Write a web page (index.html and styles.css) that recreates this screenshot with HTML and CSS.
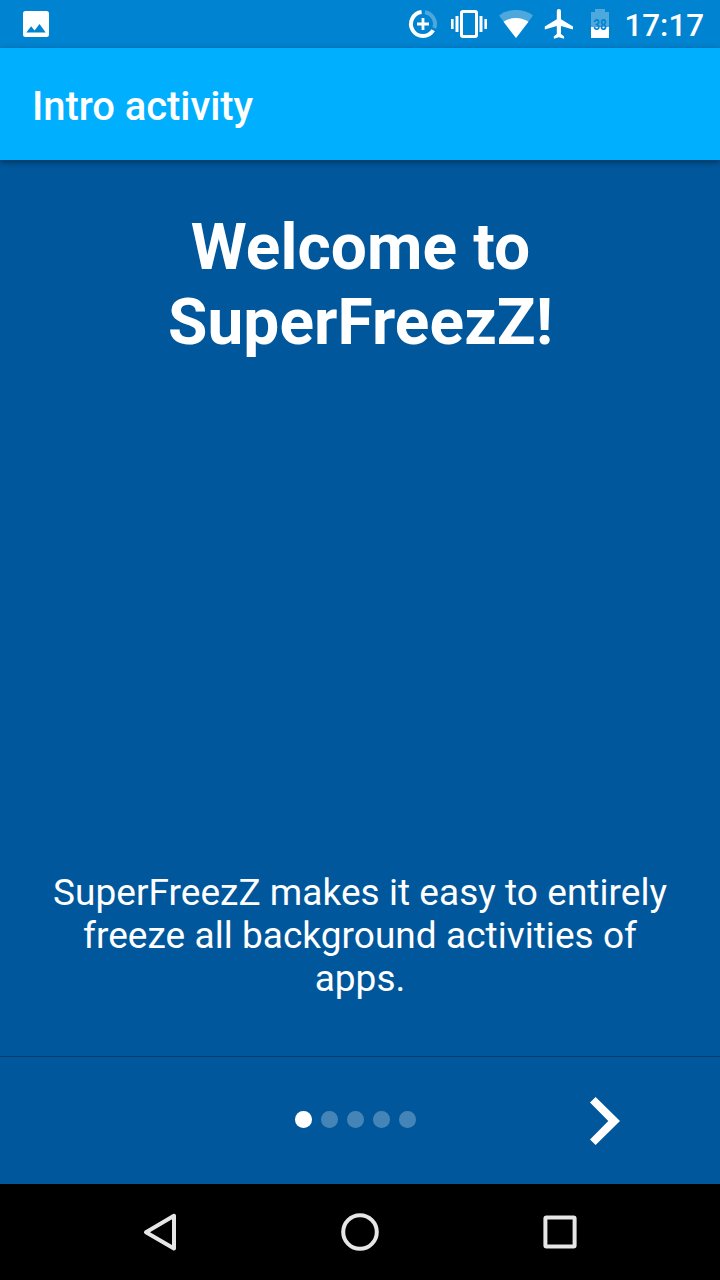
FILE: index.html
```html
<!DOCTYPE html>
<html lang="en">
<head>
<meta charset="utf-8">
<title>Intro activity</title>
<link rel="stylesheet" href="styles.css">
</head>
<body>
<div class="screen">
  <div class="status-bar">
    <svg class="icon-picture" width="26" height="26" viewBox="0 0 26 26">
      <path fill="#fff" fill-rule="evenodd" d="M2.5 0h21a2.5 2.5 0 0 1 2.5 2.5v21a2.5 2.5 0 0 1-2.5 2.5h-21A2.5 2.5 0 0 1 0 23.5v-21A2.5 2.5 0 0 1 2.5 0zM3.3 21.5h19.4l-6.2-8.5-4.9 6.5-3.5-4.3z"/>
    </svg>
    <div class="status-icons">
      <svg width="320" height="48" viewBox="400 0 320 48" class="status-glyphs">
        <g fill="none" stroke="#fff" stroke-width="4">
          <path d="M421.6 12.1A12 12 0 1 0 433.2 30.3"/>
          <path d="M425 12.2A12 12 0 0 1 434.3 28" opacity=".3"/>
          <path d="M417 24h12M423 18v12" stroke-width="2.8"/>
        </g>
        <rect x="461.5" y="11.5" width="15" height="25" rx="1.5" fill="none" stroke="#fff" stroke-width="3"/>
        <path fill="#fff" d="M455.5 16h3v16h-3zM451 19h2.6v10H451zM479.5 16h3v16h-3zM484.4 19h2.6v10h-2.6z"/>
        <path fill="#fff" opacity=".3" d="M516 38L499 15.5Q506 10 516 10T533 15.5z"/>
        <path fill="#fff" d="M516 38L503.5 21.8Q509 18 516 18T528.5 21.8z"/>
        <path fill="#fff" d="M573 29.6v-3l-12-7.4v-8.1a2.1 2.1 0 0 0-4.2 0v8.1l-12 7.4v3l12-3.7v8.2l-3 2.3v2.3l5.1-1.5 5.2 1.5v-2.3l-3.1-2.3v-8.2z"/>
        <path fill="#fff" opacity=".3" d="M591 27V12h4V9h10v3h4v15z"/>
        <path fill="#fff" d="M591 27h18v11h-18z"/>
        <text class="battery-level" x="593.3" y="30" textLength="13.5" lengthAdjust="spacingAndGlyphs">38</text>
        <text class="clock" x="624.5" y="36" textLength="79.5" lengthAdjust="spacingAndGlyphs">17:17</text>
      </svg>
    </div>
  </div>
  <header class="app-bar">Intro activity</header>
  <main class="slide">
    <h1 class="slide-title">Welcome to<br>SuperFreezZ!</h1>
    <p class="slide-text">SuperFreezZ makes it easy to entirely<br>freeze all background activities of<br>apps.</p>
  </main>
  <div class="pager">
    <div class="dots">
      <span class="dot dot-active"></span><span class="dot"></span><span class="dot"></span><span class="dot"></span><span class="dot"></span>
    </div>
    <svg class="next" width="32" height="50" viewBox="0 0 32 50">
      <path fill="#fff" d="M1 6.6L6.6 1 31 25 6.6 49 1 43.4 19.3 25z"/>
    </svg>
  </div>
  <nav class="nav-bar">
    <svg width="40" height="40" viewBox="0 0 40 40"><path d="M34 3.8v32.8L6 20.2z"/></svg>
    <svg width="40" height="40" viewBox="0 0 40 40"><circle cx="20" cy="20" r="16.8"/></svg>
    <svg width="40" height="40" viewBox="0 0 40 40"><rect x="5.4" y="5.4" width="29.2" height="29.2" rx="1"/></svg>
  </nav>
</div>
</body>
</html>
```
FILE: styles.css
```css
body {
  margin: 0;
  font-family: Roboto, sans-serif;
  color: #fff;
}
.screen {
  display: flex;
  flex-direction: column;
  width: 720px;
  height: 1280px;
  background: #01579b;
}
.status-bar {
  display: flex;
  justify-content: space-between;
  align-items: center;
  height: 48px;
  padding-left: 23px;
  background: #0083d0;
}
.status-glyphs {
  display: block;
}
.battery-level {
  font-size: 14px;
  font-weight: 700;
  fill: #0083d0;
}
.clock {
  font-size: 32px;
  font-weight: 500;
  fill: #fff;
}
.app-bar {
  box-sizing: border-box;
  height: 112px;
  padding: 3px 32px 0;
  line-height: 112px;
  font-size: 40px;
  font-weight: 500;
  letter-spacing: -.07px;
  background: #00b0ff;
  box-shadow: 0 2px 6px rgba(0, 0, 0, .42);
}
.slide {
  box-sizing: border-box;
  display: flex;
  flex-direction: column;
  justify-content: space-between;
  height: 896px;
  padding: 50px 32px 56px;
  text-align: center;
}
.slide-title {
  margin: 0;
  padding-left: 1px;
  font-size: 64px;
  font-weight: 700;
  line-height: 75px;
  letter-spacing: .08px;
}
.slide-text {
  margin: 0;
  font-size: 37px;
  line-height: 43px;
  letter-spacing: .04px;
}
.pager {
  box-sizing: border-box;
  display: flex;
  justify-content: space-between;
  height: 128px;
  padding: 0 99px 0 295px;
  border-top: 1px solid #063c6a;
}
.dots {
  display: flex;
  gap: 9.5px;
  padding-top: 54px;
}
.dot {
  width: 16.5px;
  height: 16.5px;
  border-radius: 50%;
  background: rgba(255, 255, 255, .27);
}
.dot-active {
  background: #fff;
}
.next {
  margin-top: 39px;
}
.nav-bar {
  display: flex;
  justify-content: center;
  align-items: center;
  gap: 160px;
  height: 96px;
  background: #000;
}
.nav-bar svg {
  fill: none;
  stroke: #e6e6e6;
  stroke-width: 4;
  stroke-linejoin: round;
}
```
